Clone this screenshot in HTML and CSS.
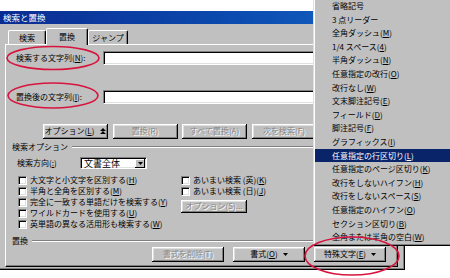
FILE: index.html
```html
<!DOCTYPE html>
<html lang="ja">
<head>
<meta charset="utf-8">
<title>検索と置換</title>
<link rel="stylesheet" href="styles.css">
</head>
<body>
<div class="screen">
  <div class="dialog">
    <div class="titlebar"><span class="title">検索と置換</span></div>
    <div class="tabs">
      <div class="tab tab-search">検索</div>
      <div class="tab tab-replace active">置換</div>
      <div class="tab tab-jump">ジャンプ</div>
    </div>
    <div class="panel">
      <div class="field-row row-find">
        <span class="field-label">検索する文字列(<u>N</u>):</span>
        <div class="textbox"></div>
      </div>
      <div class="field-row row-replace">
        <span class="field-label">置換後の文字列(<u>I</u>):</span>
        <div class="textbox"></div>
      </div>
      <div class="button-row">
        <div class="btn">オプション(<u>L</u>)<svg class="less-icon" width="6" height="7" viewBox="0 0 6 7"><path d="M3 0L6 3H0Z M3 3L6 6H0Z" fill="#000"/></svg></div>
        <div class="btn disabled">置換(R)</div>
        <div class="btn disabled">すべて置換(A)</div>
        <div class="btn disabled">次を検索(F)</div>
      </div>
      <div class="group-head head-options"><span class="group-title">検索オプション</span><span class="group-line"></span></div>
      <div class="direction-row">
        <span class="dir-label">検索方向(<u>:</u>)</span>
        <div class="select">
          <span class="select-value">文書全体</span>
          <span class="select-btn"><svg width="5" height="3" viewBox="0 0 5 3"><path d="M0 0H5L2.5 3Z" fill="#000"/></svg></span>
        </div>
      </div>
      <div class="options">
        <div class="opt-col opt-left">
          <div class="check"><span class="box"></span><span>大文字と小文字を区別する(<u>H</u>)</span></div>
          <div class="check"><span class="box"></span><span>半角と全角を区別する(<u>M</u>)</span></div>
          <div class="check"><span class="box"></span><span>完全に一致する単語だけを検索する(<u>Y</u>)</span></div>
          <div class="check"><span class="box"></span><span>ワイルドカードを使用する(<u>U</u>)</span></div>
          <div class="check"><span class="box"></span><span>英単語の異なる活用形も検索する(<u>W</u>)</span></div>
        </div>
        <div class="opt-col opt-right">
          <div class="check"><span class="box"></span><span>あいまい検索 (英)(<u>K</u>)</span></div>
          <div class="check"><span class="box"></span><span>あいまい検索 (日)(<u>J</u>)</span></div>
          <div class="btn disabled btn-fuzzy">オプション(S)...</div>
        </div>
      </div>
      <div class="group-head head-replace"><span class="group-title">置換</span><span class="group-line"></span></div>
      <div class="button-row bottom-row">
        <div class="btn wide disabled">書式を削除(T)</div>
        <div class="btn wide">書式(<u>O</u>)<svg class="drop" width="5" height="3" viewBox="0 0 5 3"><path d="M0 0H5L2.5 3Z" fill="#000"/></svg></div>
        <div class="btn wide">特殊文字(<u>E</u>)<svg class="drop" width="5" height="3" viewBox="0 0 5 3"><path d="M0 0H5L2.5 3Z" fill="#000"/></svg></div>
      </div>
    </div>
  </div>

  <div class="menu">
    <div class="item">省略記号</div>
    <div class="item">3 点リーダー</div>
    <div class="item">全角ダッシュ(<u>M</u>)</div>
    <div class="item">1/4 スペース(<u>4</u>)</div>
    <div class="item">半角ダッシュ(<u>N</u>)</div>
    <div class="item">任意指定の改行(<u>O</u>)</div>
    <div class="item">改行なし(<u>W</u>)</div>
    <div class="item">文末脚注記号(<u>E</u>)</div>
    <div class="item">フィールド(<u>D</u>)</div>
    <div class="item">脚注記号(<u>F</u>)</div>
    <div class="item">グラフィックス(<u>I</u>)</div>
    <div class="item selected">任意指定の行区切り(<u>L</u>)</div>
    <div class="item">任意指定のページ区切り(<u>K</u>)</div>
    <div class="item">改行をしないハイフン(<u>H</u>)</div>
    <div class="item">改行をしないスペース(<u>S</u>)</div>
    <div class="item">任意指定のハイフン(<u>O</u>)</div>
    <div class="item">セクション区切り(<u>B</u>)</div>
    <div class="item">全角または半角の空白(<u>W</u>)</div>
  </div>

  <svg class="marks" width="450" height="278" viewBox="0 0 450 278">
    <ellipse cx="53" cy="58" rx="46" ry="11.5" />
    <ellipse cx="53" cy="95.5" rx="45" ry="12.5" />
    <ellipse cx="352" cy="256" rx="47" ry="19" />
  </svg>
</div>
</body>
</html>
```

FILE: styles.css
```css
* {
  box-sizing: border-box;
  margin: 0;
  padding: 0;
}

html, body {
  width: 450px;
  height: 278px;
  overflow: hidden;
  background: #fff;
}

body {
  font-family: "Noto Sans CJK JP", "Noto Sans", sans-serif;
  font-size: 8px;
  line-height: 1;
  color: #000;
}

u {
  text-decoration: underline;
  text-underline-offset: 1px;
}

.screen {
  position: relative;
  width: 450px;
  height: 278px;
  overflow: hidden;
}

/* ---------- dialog ---------- */
.dialog {
  margin-top: 11px;
  width: 405px;
  height: 259px;
  background: #c0c0c0;
  border-right: 1px solid #000;
  border-bottom: 1px solid #000;
  box-shadow: inset -1px -1px 0 #808080;
  display: flex;
  flex-direction: column;
}

.titlebar {
  height: 13px;
  flex: none;
  background: linear-gradient(to right, #0a2c92, #0c4cb0 60%, #1466c4);
  color: #fff;
  padding-left: 3px;
  display: flex;
  align-items: center;
  font-size: 8.5px;
}

.tabs {
  flex: none;
  height: 16px;
  margin-top: 4px;
  padding-left: 8px;
  display: flex;
  align-items: flex-end;
  position: relative;
  z-index: 2;
}

.tab {
  height: 14px;
  background: #c0c0c0;
  border-top: 1px solid #fff;
  border-left: 1px solid #fff;
  border-right: 1px solid #000;
  box-shadow: inset -1px 0 0 #808080;
  border-radius: 2px 2px 0 0;
  display: flex;
  align-items: center;
  justify-content: center;
  padding-top: 1px;
}

.tab-search { width: 38px; }
.tab-replace { width: 42px; }
.tab-jump { width: 40px; }

.tab.active {
  height: 17px;
  margin-bottom: -1px;
  padding-bottom: 2px;
}

.panel {
  flex: none;
  margin-left: 5px;
  width: 393px;
  height: 223px;
  border-top: 1px solid #fff;
  border-left: 1px solid #fff;
  border-right: 1px solid #000;
  border-bottom: 1px solid #000;
  box-shadow: inset -1px -1px 0 #808080;
  display: flex;
  flex-direction: column;
  padding-bottom: 3px;
}

/* ---------- fields ---------- */
.field-row {
  display: flex;
  align-items: center;
  height: 14px;
  padding-left: 10px;
}

.row-find { margin-top: 6px; }
.row-replace { margin-top: 25px; }

.field-label {
  width: 87px;
  flex: none;
  white-space: nowrap;
}

.textbox {
  width: 289px;
  height: 14px;
  background: #fff;
  border-top: 1px solid #808080;
  border-left: 1px solid #808080;
  border-right: 1px solid #fff;
  border-bottom: 1px solid #fff;
  box-shadow: inset 1px 1px 0 #000, inset -1px -1px 0 #dfdfdf;
}

/* ---------- buttons ---------- */
.button-row {
  display: flex;
  gap: 4.5px;
  height: 15px;
  margin-top: 20px;
  padding-left: 37px;
}

.btn {
  width: 65px;
  height: 15px;
  flex: none;
  background: #c0c0c0;
  box-shadow: inset -1px -1px 0 #000, inset 1px 1px 0 #fff, inset -2px -2px 0 #808080, inset 2px 2px 0 #dfdfdf;
  display: flex;
  align-items: center;
  justify-content: center;
  white-space: nowrap;
  padding-bottom: 1px;
}

.btn.disabled {
  color: #868686;
  text-shadow: 1px 1px 0 #fff;
}

.less-icon {
  margin-left: 6px;
}

.drop {
  margin-left: 5px;
}

.bottom-row {
  margin-top: 1px;
  padding-left: 146px;
  gap: 9px;
}

.btn.wide {
  width: 72px;
}

/* ---------- group headers ---------- */
.group-head {
  display: flex;
  align-items: center;
  height: 10px;
  padding-left: 6px;
  padding-right: 5px;
}

.head-options { margin-top: 3px; }
.head-replace { margin-top: 6.5px; }

.group-title {
  white-space: nowrap;
  margin-right: 4px;
}

.group-line {
  flex: 1;
  height: 2px;
  border-top: 1px solid #808080;
  border-bottom: 1px solid #fff;
}

/* ---------- search direction ---------- */
.direction-row {
  display: flex;
  align-items: center;
  height: 12px;
  margin-top: 5px;
  padding-left: 11px;
}

.dir-label {
  width: 63px;
  flex: none;
}

.select {
  width: 67px;
  height: 12px;
  background: #fff;
  border-top: 1px solid #808080;
  border-left: 1px solid #808080;
  border-right: 1px solid #fff;
  border-bottom: 1px solid #fff;
  box-shadow: inset 1px 1px 0 #000, inset -1px -1px 0 #dfdfdf;
  display: flex;
  align-items: center;
  padding: 1px 1px 1px 3px;
}

.select-value {
  flex: 1;
  font-size: 9px;
}

.select-btn {
  width: 10px;
  height: 9px;
  background: #c0c0c0;
  box-shadow: inset -1px -1px 0 #000, inset 1px 1px 0 #fff;
  display: flex;
  align-items: center;
  justify-content: center;
}

/* ---------- options ---------- */
.options {
  display: flex;
  margin-top: 5.5px;
  padding-left: 12px;
  height: 55px;
}

.opt-col {
  display: flex;
  flex-direction: column;
}

.opt-left {
  width: 163px;
}

.check {
  display: flex;
  align-items: center;
  height: 11px;
  white-space: nowrap;
}

.box {
  width: 9px;
  height: 9px;
  flex: none;
  margin-right: 3px;
  background: #fff;
  border-top: 1px solid #808080;
  border-left: 1px solid #808080;
  border-right: 1px solid #fff;
  border-bottom: 1px solid #fff;
  box-shadow: inset 1px 1px 0 #000, inset -1px -1px 0 #dfdfdf;
}

.btn-fuzzy {
  margin-top: 3.5px;
  width: 66px;
  height: 13px;
}

/* ---------- popup menu ---------- */
.menu {
  position: absolute;
  left: 313px;
  top: -3px;
  width: 140px;
  background: #c0c0c0;
  padding: 2px;
  box-shadow: inset 1px 1px 0 #dfdfdf, inset -1px -1px 0 #000, inset 2px 2px 0 #fff, inset -2px -2px 0 #808080;
  z-index: 5;
}

.item {
  height: 13.6px;
  line-height: 13.6px;
  padding-left: 17px;
  white-space: nowrap;
}

.item.selected {
  background: #0a246a;
  color: #fff;
}

/* ---------- annotation ellipses ---------- */
.marks {
  position: absolute;
  left: 0;
  top: 0;
  z-index: 10;
  pointer-events: none;
}

.marks ellipse {
  fill: none;
  stroke: #d8143e;
  stroke-width: 1.6;
}
```
